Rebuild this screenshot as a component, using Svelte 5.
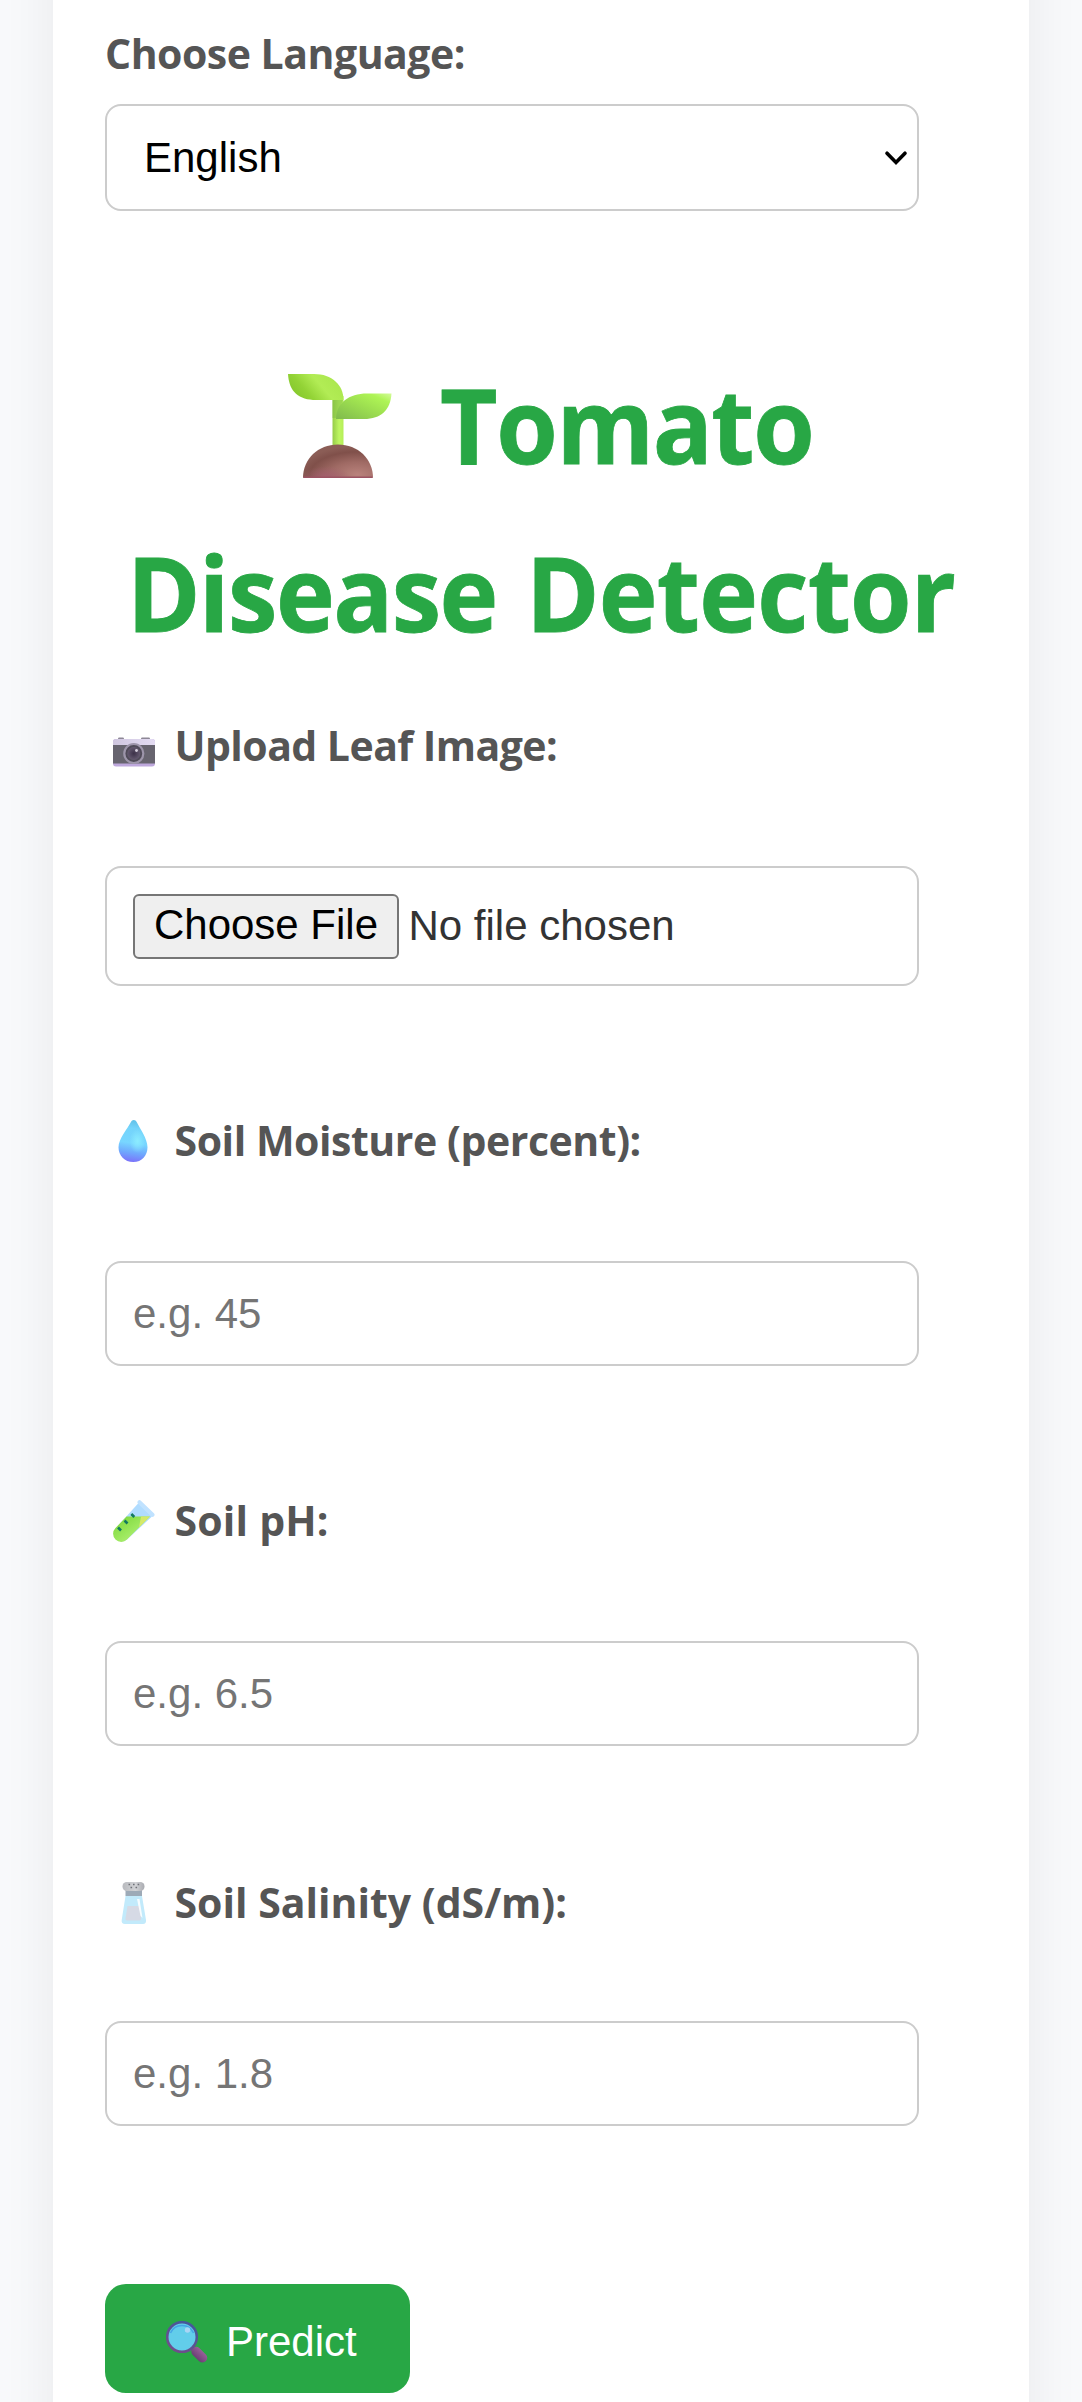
<script>
  const fields = [
    { id: 'moisture', icon: 'drop', label: 'Soil Moisture (percent):', hint: 'e.g. 45' },
    { id: 'ph', icon: 'tube', label: 'Soil pH:', hint: 'e.g. 6.5' },
    { id: 'salinity', icon: 'salt', label: 'Soil Salinity (dS/m):', hint: 'e.g. 1.8' }
  ];
</script>

{#snippet glyph(name)}
  <svg class="glyph" viewBox="0 0 42 42" aria-hidden="true">
    {#if name === 'camera'}
      <defs>
        <linearGradient id="camTop" x1="0" y1="0" x2="1" y2="0"><stop offset="0" stop-color="#cfc6df" /><stop offset="1" stop-color="#e4dcf3" /></linearGradient>
        <radialGradient id="camLens"><stop offset="0" stop-color="#3c3148" /><stop offset="1" stop-color="#655a70" /></radialGradient>
      </defs>
      <rect x="5" y="12.5" width="6" height="3" rx="1.2" fill="#8d8796" />
      <rect x="28" y="12.5" width="9" height="3" rx="1.2" fill="#8d8796" />
      <rect x="0" y="14" width="42" height="27.5" rx="3" fill="#bea8dc" />
      <path d="M3 14h36a3 3 0 0 1 3 3v5H0v-5a3 3 0 0 1 3-3z" fill="url(#camTop)" />
      <rect x="0" y="20" width="42" height="18.5" fill="#67646f" />
      <circle cx="20.8" cy="28.5" r="9.5" fill="#504b59" stroke="#9d95aa" stroke-width="2.2" />
      <circle cx="20.8" cy="28.5" r="6.5" fill="url(#camLens)" />
      <circle cx="23.5" cy="25.5" r="1.4" fill="#d9d3e0" />
    {:else if name === 'drop'}
      <defs>
        <linearGradient id="dropFill" x1=".55" y1="0" x2=".45" y2="1"><stop offset="0" stop-color="#5fc0e8" /><stop offset=".2" stop-color="#74d4fb" /><stop offset=".55" stop-color="#78d6ff" /><stop offset=".78" stop-color="#6fa8fd" /><stop offset="1" stop-color="#7b72fa" /></linearGradient>
        <radialGradient id="dropShine"><stop offset="0" stop-color="#8cecff" /><stop offset="1" stop-color="#8cecff" stop-opacity="0" /></radialGradient>
      </defs>
      <path d="M20.8 0c1.3 0 2.2.8 3 2.3C27 8.6 34.500 19 34.500 27.2 34.500 35.600 29 42 20.300 42S5.500 35.600 5.500 27.200C5.500 19 14.500 8.600 17.800 2.300 18.600.8 19.500 0 20.800 0z" fill="url(#dropFill)" />
      <ellipse cx="24.500" cy="21" rx="8" ry="12" fill="url(#dropShine)" />
    {:else if name === 'tube'}
      <defs>
        <linearGradient id="tubeFill" x1="0" y1="0" x2="1" y2="1"><stop offset="0" stop-color="#79d335" /><stop offset=".5" stop-color="#9be85c" /><stop offset="1" stop-color="#c4f28b" /></linearGradient>
      </defs>
      <path d="M25.500 3 39 16.500 14 39.500a8 8 0 0 1-11.500-11z" fill="#b0dcff" />
      <path d="M13.500 16.500H37L14 39.500A8 8 0 0 1 2.500 28z" fill="url(#tubeFill)" />
      <path d="M28 16.500h9L26 27.500z" fill="#d5e96a" />
      <path d="m26.500 2.200 13 12.600" stroke="#c0e2ff" stroke-width="4" stroke-linecap="round" />
      <path d="m5 27.500 3 3M11.500 20.500l3 3M18.300 14l3 3" stroke="#12795f" stroke-width="2.600" />
    {:else if name === 'salt'}
      <defs>
        <linearGradient id="capFill" x1="0" y1="0" x2="1" y2="0"><stop offset="0" stop-color="#b8babe" /><stop offset=".6" stop-color="#d2d3d6" /><stop offset="1" stop-color="#a8aab0" /></linearGradient>
      </defs>
      <path d="M12.500 14h16.500l4 24c.3 2.500-.8 4-3 4H12c-2.500 0-3.700-1.500-3.300-4z" fill="#c2eafb" />
      <path d="M14.500 24h12.500l1 12.500c.1 1.300-.4 2-1.500 2H14c-1.200 0-1.700-.7-1.500-2z" fill="#d6dae5" />
      <path d="M24 17h2.500l3 19-2-2z" fill="#fff" opacity=".85" />
      <rect x="12.500" y="8" width="16.500" height="6" fill="#9daab7" />
      <rect x="9.500" y="0" width="22" height="9" rx="4.200" fill="url(#capFill)" />
      <path d="M15.500 2.500h1.600M20 2.500h1.600M24.600 2.500h1.600M17.500 5.500h1.600M22.500 5.500h1.600" stroke="#6f7278" stroke-width="1.400" />
    {:else if name === 'lens'}
      <defs>
        <linearGradient id="gripFill" x1="0" y1="1" x2="1" y2="0"><stop offset="0" stop-color="#6d4076" /><stop offset="1" stop-color="#985e98" /></linearGradient>
        <linearGradient id="rimFill" x1="0" y1="1" x2=".6" y2="0"><stop offset="0" stop-color="#774b88" /><stop offset="1" stop-color="#46589a" /></linearGradient>
      </defs>
      <path d="m26 26 4 4" stroke="#62507c" stroke-width="4" />
      <path d="m30 30.500 6.500 6.300" stroke="url(#gripFill)" stroke-width="9.500" stroke-linecap="round" />
      <circle cx="16" cy="16" r="14.800" fill="#62cdea" stroke="url(#rimFill)" stroke-width="2.600" />
      <path d="M4.500 12a12.500 12.500 0 0 1 23 0" fill="none" stroke="#45a5e6" stroke-width="1.500" />
      <circle cx="21.500" cy="9" r="2.700" fill="#a9d5f4" />
    {/if}
  </svg>
{/snippet}

<div class="page">
  <main class="card">
    <p class="label language">Choose Language:</p>
    <button class="box select" type="button">
      <span>English</span>
      <svg class="chevron" viewBox="0 0 24 16" aria-hidden="true"><path d="m3 3.200 9 9.300 9-9.300" /></svg>
    </button>

    <h1>
      <span class="line first">
        <svg class="seedling" viewBox="0 0 104 104" aria-hidden="true">
          <defs>
            <linearGradient id="leafL" x1="0" y1=".7" x2="1" y2=".3"><stop offset="0" stop-color="#82c52b" /><stop offset=".3" stop-color="#93d336" /><stop offset=".6" stop-color="#b2ec55" /><stop offset="1" stop-color="#a9e64c" /></linearGradient>
            <linearGradient id="leafR" x1="0" y1="1" x2="1" y2="0"><stop offset="0" stop-color="#80ba4d" /><stop offset=".5" stop-color="#9ddf50" /><stop offset=".8" stop-color="#aef455" /><stop offset="1" stop-color="#d4fb9b" /></linearGradient>
            <linearGradient id="stem" x1="0" y1="0" x2="1" y2="0"><stop offset="0" stop-color="#96cc48" /><stop offset=".6" stop-color="#bef661" /><stop offset="1" stop-color="#b5ee58" /></linearGradient>
            <radialGradient id="soil" cx=".78" cy=".9" r=".85"><stop offset="0" stop-color="#b9827c" /><stop offset=".45" stop-color="#9f6a64" /><stop offset=".8" stop-color="#80504a" /><stop offset="1" stop-color="#8b5d56" /></radialGradient>
            <radialGradient id="soilGlow" cx=".33" cy="1" r=".35"><stop offset="0" stop-color="#a45f6e" /><stop offset="1" stop-color="#a45f6e" stop-opacity="0" /></radialGradient>
          </defs>
          <path d="M44.500 22H55.500V74H44.500z" fill="url(#stem)" />
          <path d="M44.500 26H55l-7 18h-3.500z" fill="#82be47" opacity=".55" />
          <path d="M0 0H26C44 0 55.500 11 55.500 26H28C11 26 1 18 0 0z" fill="url(#leafL)" />
          <path d="M103.500 19.500H79C61 19.500 48 29 48 45H76C93 45 102.500 36 103.500 19.500z" fill="url(#leafR)" />
          <path d="M15 103.800C15 85 30 70.500 50 70.500S85 85 85 103.800z" fill="url(#soil)" />
          <path d="M15 103.800C15 85 30 70.500 50 70.500S85 85 85 103.800z" fill="url(#soilGlow)" />
          <path d="M15.500 103.200H84.500" stroke="#9c5363" stroke-width="1.400" />
        </svg>
        <span class="word tomato">Tomato</span>
      </span>
      <span class="line second">
        <span class="word disease">Disease</span>
        <span class="word detector">Detector</span>
      </span>
    </h1>

    <p class="label upload">{@render glyph('camera')}<span>Upload Leaf Image:</span></p>
    <div class="box file">
      <button class="choose" type="button">Choose File</button>
      <span class="status">No file chosen</span>
    </div>

    {#each fields as field (field.id)}
      <label class="label {field.id}" for={field.id}>{@render glyph(field.icon)}<span>{field.label}</span></label>
      <input class="box" id={field.id} type="text" placeholder={field.hint} />
    {/each}

    <button class="predict" type="button">{@render glyph('lens')}<span>Predict</span></button>
  </main>
</div>

<style>
  :global(body) {
    background: #f8f9fb;
  }
  .page {
    display: flow-root;
    height: 2402px;
    overflow: hidden;
  }
  /* The card runs past both ends of the page so its side shadows stay even. */
  .card {
    box-sizing: border-box;
    display: flex;
    flex-direction: column;
    align-items: flex-start;
    height: 2562px;
    margin: -80px 53px;
    padding: 99px 52px 0;
    background: #fff;
    box-shadow: 0 0 52px rgba(0, 0, 0, 0.065);
  }
  .label {
    display: flex;
    height: 67px;
    margin: 0;
    font: bold 41px/68px 'Open Sans', sans-serif;
    color: #555;
    white-space: nowrap;
  }
  .glyph {
    flex: none;
    width: 42px;
    height: 42px;
    margin: 14px 19.500px 0 8px;
  }
  .language { letter-spacing: -0.5px; }
  .upload { margin-top: 36px; letter-spacing: -0.55px; }
  .moisture { margin-top: 120px; letter-spacing: -0.45px; }
  .ph { margin-top: 120px; letter-spacing: 0.2px; }
  .salinity { margin-top: 122px; letter-spacing: 0; }
  .box {
    box-sizing: border-box;
    width: 814px;
    height: 105px;
    margin: 88px 0 0;
    padding: 0 26px;
    border: 2px solid #ccc;
    border-radius: 16px;
    background: #fff;
    font: 42px 'Liberation Sans', Arial, sans-serif;
    color: #000;
  }
  .box::placeholder {
    color: #757575;
    opacity: 1;
  }
  .salinity + .box { margin-top: 86px; }
  .select {
    display: flex;
    align-items: center;
    justify-content: space-between;
    height: 107px;
    margin-top: 18px;
    padding: 1px 9px 0 37px;
  }
  .chevron {
    width: 24px;
    height: 16px;
    fill: none;
    stroke: #000;
    stroke-width: 3.600px;
    stroke-linecap: round;
  }
  h1 {
    margin: 128px 0 0;
    font: bold 103.600px/168px 'Open Sans', sans-serif;
    color: #28a745;
  }
  .line {
    display: flex;
    height: 168px;
  }
  .first { padding-left: 183px; }
  .second { padding-left: 22px; }
  .seedling {
    width: 104px;
    height: 104px;
    margin: 35px 48px 0 0;
  }
  .word {
    transform: translateY(1px) scaleX(0.96);
    transform-origin: left;
    -webkit-text-stroke: 0.800px #28a745;
  }
  .tomato { letter-spacing: -1.440px; }
  .disease { width: 398.500px; letter-spacing: -1.570px; }
  .detector { letter-spacing: -0.790px; }
  .file {
    display: flex;
    align-items: center;
    height: 120px;
  }
  .choose {
    box-sizing: border-box;
    width: 266px;
    height: 65px;
    margin-right: 9.500px;
    padding: 0 0 3px;
    border: 2px solid #767676;
    border-radius: 6px;
    background: #efefef;
    font: inherit;
    color: #000;
  }
  .status { color: #333; }
  .predict {
    display: flex;
    width: 305px;
    height: 109px;
    margin-top: 158px;
    padding: 0;
    border: 0;
    border-radius: 21px;
    background: #28a745;
    font: 42px/115px 'Liberation Sans', Arial, sans-serif;
    color: #fff;
  }
  .predict .glyph { margin: 37px 18px 0 61px; }
</style>
